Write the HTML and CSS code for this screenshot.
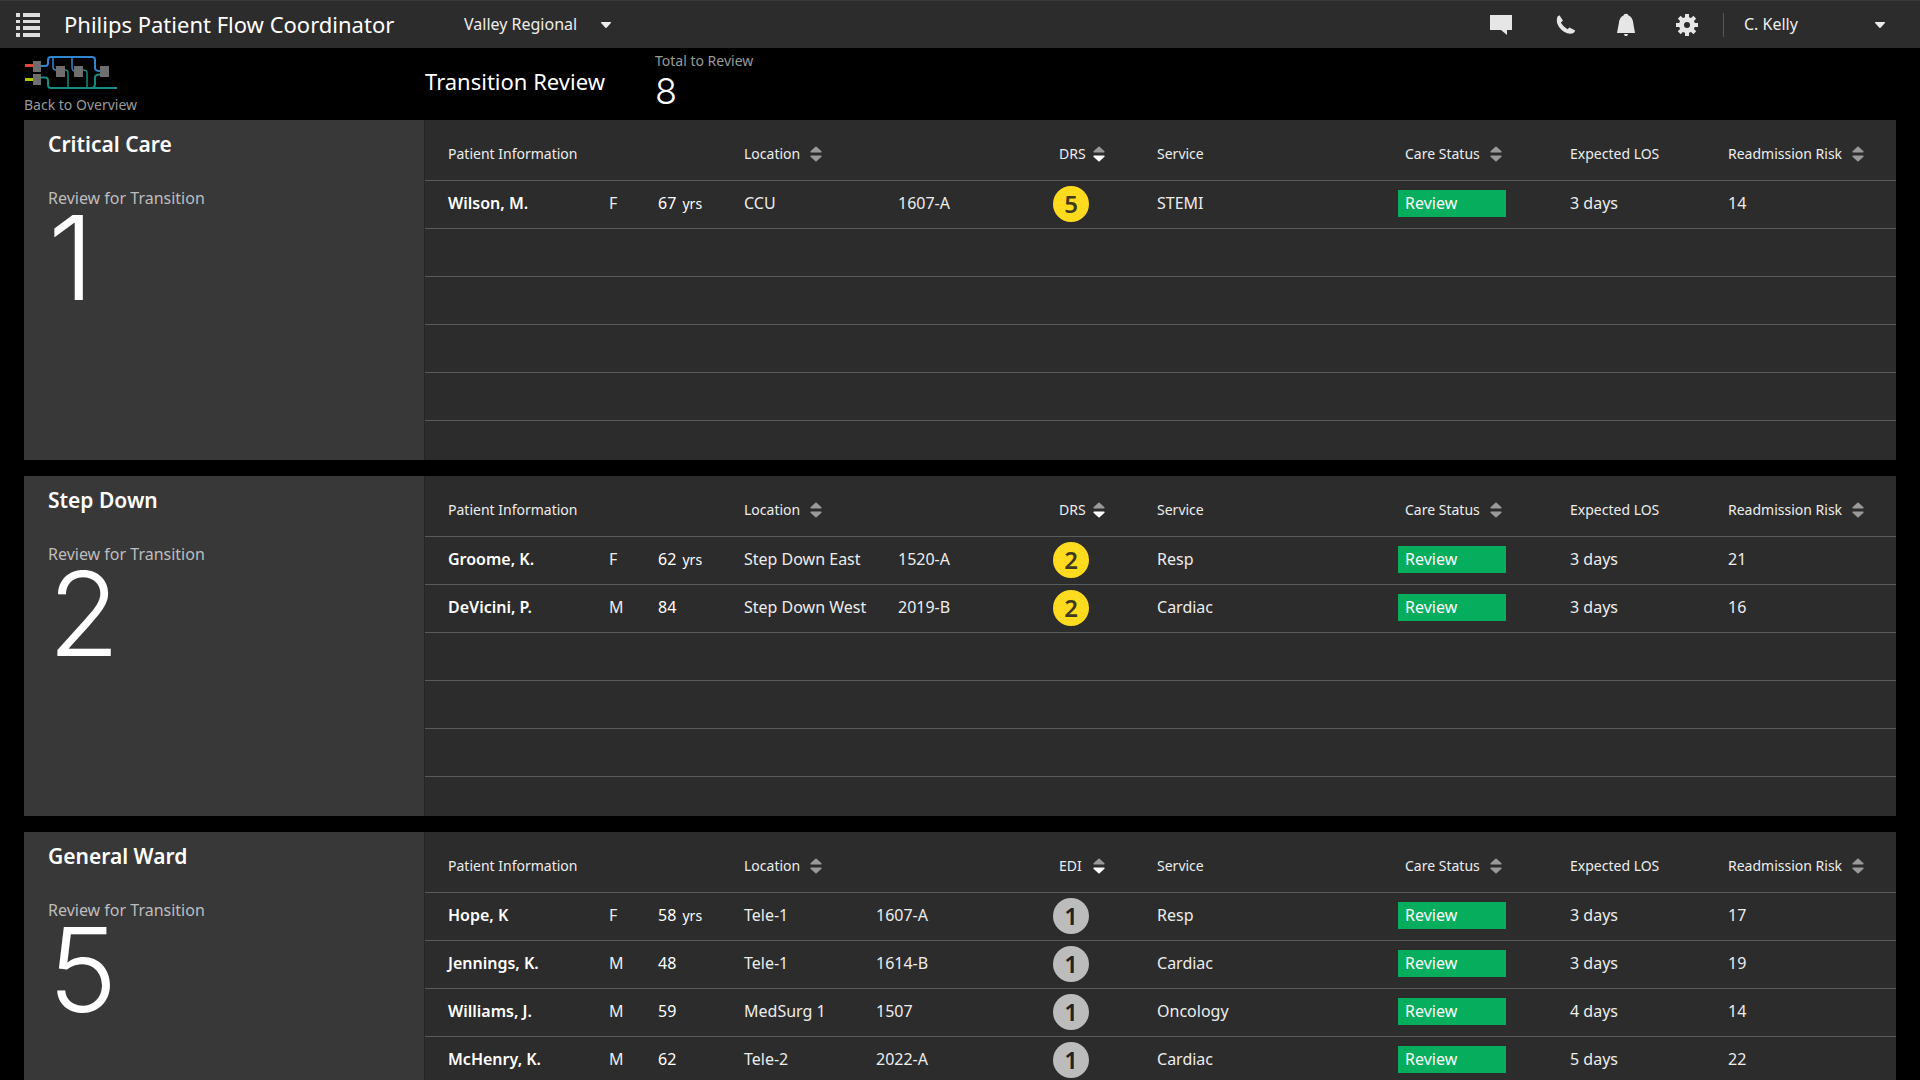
FILE: index.html
```html
<!DOCTYPE html>
<html lang="en">
<head>
<meta charset="utf-8">
<title>Transition Review</title>
<link rel="stylesheet" href="styles.css">
</head>
<body>
<svg width="0" height="0" class="defs" aria-hidden="true">
  <symbol id="caret" viewBox="0 0 12 8"><path d="M1.5 1h9q1 .2.4 1.1L6.6 6.8q-.6.5-1.2 0L1.1 2.1Q.6 1.2 1.5 1z"/></symbol>
  <symbol id="sort" viewBox="0 0 12 16"><path d="M5.4.7q.6-.5 1.2 0L11.5 5.2q.5 1-.5 1.3H1Q0 6.200.5 5.200z"/><path class="down" d="M5.400 15.300q.6.5 1.200 0L11.500 10.800q.5-1-.5-1.300H1Q0 9.800.5 10.800z"/></symbol>
</svg>

<header class="topbar">
  <div class="brand">
    <button class="menu" aria-label="Menu"><svg width="24" height="24" viewBox="0 0 24 24"><path d="M0 0h4v4H0zM7 0h17v4H7zM0 7h4v3H0zM7 7h17v3H7zM0 13h4v4H0zM7 13h17v4H7zM0 20h4v4H0zM7 20h17v4H7z"/></svg></button>
    <span class="product">Philips Patient Flow Coordinator</span>
  </div>
  <label class="site">
    <select aria-label="Hospital"><option>Valley Regional</option></select>
    <svg class="caret" width="12" height="8"><use href="#caret"/></svg>
  </label>
  <nav class="tools">
    <button aria-label="Messages"><svg width="24" height="24" viewBox="0 0 24 24"><path d="M1 2h22v15h-5v5l-6-5H1z"/></svg></button>
    <button aria-label="Calls"><svg width="24" height="24" viewBox="0 0 24 24"><path d="M6.500 3.500L8.500 2.200L12 7.800L9.800 9.600Q12 14 16.500 16.200L18.500 14.400L24.200 17.600Q23 20.800 19.500 20.800Q12.500 20.200 8 14Q4.500 8.500 6.500 3.500Z"/></svg></button>
    <button aria-label="Alerts"><svg width="24" height="24" viewBox="0 0 24 24"><path d="M13 .8q2.500 0 2.500 1.700q4.200 1.500 4.800 8L22 20H4L5.800 10.500q.6-6.500 4.700-8Q10.500.8 13 .8ZM11 21h4l-.8 2h-2.400z"/></svg></button>
    <button aria-label="Settings"><svg width="24" height="24" viewBox="0 0 24 24"><path fill-rule="evenodd" d="M12 4a8 8 0 1 0 0 16a8 8 0 0 0 0-16zM12 9a3 3 0 1 1 0 6a3 3 0 0 1 0-6z"/><path d="M10 1h4v5h-4zM10 18h4v5h-4zM1 10h5v4H1zM18 10h5v4h-5z"/><path transform="rotate(45 12 12)" d="M10 1h4v5h-4zM10 18h4v5h-4zM1 10h5v4H1zM18 10h5v4h-5z"/></svg></button>
  </nav>
  <button class="user"><span>C. Kelly</span><svg class="caret" width="12" height="8"><use href="#caret"/></svg></button>
</header>

<div class="subbar">
  <a class="back" href="#">
    <svg width="96" height="40" viewBox="24 52 96 40">
      <g fill="none" stroke="#2f86cf" stroke-width="2"><path d="M41 66h4q3 0 3-3v-3q0-3 3-3h41q3 0 3 3v8q0 3 5 3"/><path stroke-width="1.500" d="M53 57v10q0 3 3 3M72 57v10q0 4 3 4"/></g>
      <g fill="none" stroke="#168a7c" stroke-width="2"><path d="M41 77.500h4q3 0 3 3V85q0 3 3 3h66M100 74.500q-5 0-5 3V84q0 4-4 4"/><path stroke-width="1.500" d="M65 70q3 0 3 3v15M83 70q4 0 4 3v15"/></g>
      <path stroke="#e2483a" stroke-width="3" d="M25 65.500h8"/><path stroke="#b4c800" stroke-width="3" d="M25 79.500h8"/>
      <path fill="#6e6e6e" d="M33 61h8v11h-8zM33 74h8v11h-8zM56 66h9v11h-9zM74 66h9v11h-9zM100 66h9v11h-9z"/>
    </svg>
    <span>Back to Overview</span>
  </a>
  <h1>Transition Review</h1>
  <div class="total"><span>Total to Review</span><strong>8</strong></div>
</div>

<main>
  <section class="unit">
    <div class="summary"><h2>Critical Care</h2><p>Review for Transition</p><strong>1</strong></div>
    <div class="list">
      <table>
        <colgroup><col class="name"><col class="sex"><col class="age"><col class="ward"><col class="room"><col class="score"><col class="service"><col class="status"><col class="los"><col class="risk"></colgroup>
        <thead><tr><th colspan="3">Patient Information</th><th colspan="2"><button class="sort"><span>Location</span><svg width="12" height="16"><use href="#sort"/></svg></button></th><th class="score-cell"><button class="sort"><span>DRS</span><svg width="12" height="16"><use href="#sort"/></svg></button></th><th>Service</th><th class="status-cell"><button class="sort"><span>Care Status</span><svg width="12" height="16"><use href="#sort"/></svg></button></th><th>Expected LOS</th><th><button class="sort"><span>Readmission Risk</span><svg width="12" height="16"><use href="#sort"/></svg></button></th></tr></thead>
        <tbody>
          <tr><td>Wilson, M.</td><td>F</td><td class="years">67 <small>yrs</small></td><td>CCU</td><td>1607-A</td><td class="mark"><span class="badge high">5</span></td><td>STEMI</td><td><span class="tag">Review</span></td><td>3 days</td><td>14</td></tr>
        </tbody>
      </table>
    </div>
  </section>

  <section class="unit">
    <div class="summary"><h2>Step Down</h2><p>Review for Transition</p><strong>2</strong></div>
    <div class="list">
      <table>
        <colgroup><col class="name"><col class="sex"><col class="age"><col class="ward"><col class="room"><col class="score"><col class="service"><col class="status"><col class="los"><col class="risk"></colgroup>
        <thead><tr><th colspan="3">Patient Information</th><th colspan="2"><button class="sort"><span>Location</span><svg width="12" height="16"><use href="#sort"/></svg></button></th><th class="score-cell"><button class="sort"><span>DRS</span><svg width="12" height="16"><use href="#sort"/></svg></button></th><th>Service</th><th class="status-cell"><button class="sort"><span>Care Status</span><svg width="12" height="16"><use href="#sort"/></svg></button></th><th>Expected LOS</th><th><button class="sort"><span>Readmission Risk</span><svg width="12" height="16"><use href="#sort"/></svg></button></th></tr></thead>
        <tbody>
          <tr><td>Groome, K.</td><td>F</td><td class="years">62 <small>yrs</small></td><td>Step Down East</td><td>1520-A</td><td class="mark"><span class="badge high">2</span></td><td>Resp</td><td><span class="tag">Review</span></td><td>3 days</td><td>21</td></tr>
          <tr><td>DeVicini, P.</td><td>M</td><td class="years">84</td><td>Step Down West</td><td>2019-B</td><td class="mark"><span class="badge high">2</span></td><td>Cardiac</td><td><span class="tag">Review</span></td><td>3 days</td><td>16</td></tr>
        </tbody>
      </table>
    </div>
  </section>

  <section class="unit">
    <div class="summary"><h2>General Ward</h2><p>Review for Transition</p><strong>5</strong></div>
    <div class="list">
      <table>
        <colgroup><col class="name"><col class="sex"><col class="age"><col class="ward short"><col class="room wide"><col class="score"><col class="service"><col class="status"><col class="los"><col class="risk"></colgroup>
        <thead><tr><th colspan="3">Patient Information</th><th colspan="2"><button class="sort"><span>Location</span><svg width="12" height="16"><use href="#sort"/></svg></button></th><th class="score-cell"><button class="sort"><span>EDI</span><svg width="12" height="16"><use href="#sort"/></svg></button></th><th>Service</th><th class="status-cell"><button class="sort"><span>Care Status</span><svg width="12" height="16"><use href="#sort"/></svg></button></th><th>Expected LOS</th><th><button class="sort"><span>Readmission Risk</span><svg width="12" height="16"><use href="#sort"/></svg></button></th></tr></thead>
        <tbody>
          <tr><td>Hope, K</td><td>F</td><td class="years">58 <small>yrs</small></td><td>Tele-1</td><td>1607-A</td><td class="mark"><span class="badge">1</span></td><td>Resp</td><td><span class="tag">Review</span></td><td>3 days</td><td>17</td></tr>
          <tr><td>Jennings, K.</td><td>M</td><td class="years">48</td><td>Tele-1</td><td>1614-B</td><td class="mark"><span class="badge">1</span></td><td>Cardiac</td><td><span class="tag">Review</span></td><td>3 days</td><td>19</td></tr>
          <tr><td>Williams, J.</td><td>M</td><td class="years">59</td><td>MedSurg 1</td><td>1507</td><td class="mark"><span class="badge">1</span></td><td>Oncology</td><td><span class="tag">Review</span></td><td>4 days</td><td>14</td></tr>
          <tr><td>McHenry, K.</td><td>M</td><td class="years">62</td><td>Tele-2</td><td>2022-A</td><td class="mark"><span class="badge">1</span></td><td>Cardiac</td><td><span class="tag">Review</span></td><td>5 days</td><td>22</td></tr>
        </tbody>
      </table>
    </div>
  </section>
</main>
</body>
</html>
```
FILE: styles.css
```css
* { box-sizing: border-box; }

body {
  margin: 0;
  height: 100vh;
  display: flex;
  flex-direction: column;
  overflow: hidden;
  background: #000;
  color: #ececec;
  font: 16px/24px "Noto Sans", sans-serif;
}

h1, h2, p { margin: 0; }

button, select {
  margin: 0;
  padding: 0;
  border: 0;
  background: none;
  color: inherit;
  font: inherit;
  text-align: left;
  appearance: none;
  cursor: pointer;
}

svg { display: block; fill: currentColor; }

.defs { position: absolute; }

/* Top bar */
.topbar {
  flex: none;
  display: flex;
  height: 48px;
  border-top: 1px solid #383838;
  background: #2c2c2c;
}

.brand { flex: 0 0 464px; display: flex; align-items: center; gap: 24px; padding-left: 16px; }
.menu { color: #dedede; }
.product { padding-bottom: 2px; color: #fff; font-size: 22px; white-space: nowrap; }

.site { display: grid; align-items: center; justify-items: end; width: 148px; }
.site > * { grid-area: 1 / 1; }
.site select { width: 100%; padding-bottom: 2px; }
.site .caret { pointer-events: none; }

.tools { display: flex; margin-left: auto; }
.tools button { display: grid; place-items: center; width: 62px; color: #e6e6e6; }
.tools svg { overflow: visible; }

.user {
  display: flex;
  align-items: center;
  justify-content: space-between;
  width: 197px;
  margin-left: 5px;
  padding-right: 34px;
}
.user span { padding: 0 0 2px 20px; border-left: 1px solid #555; line-height: 22px; }

/* Page heading */
.subbar { flex: none; display: flex; height: 72px; padding-top: 1px; }
.back {
  width: 401px;
  margin-left: 24px;
  padding-top: 3px;
  color: #9a9a9a;
  font-size: 14px;
  text-decoration: none;
}
.back span { display: block; padding-top: 1px; }
h1 { width: 230px; padding-top: 16px; color: #fff; font-size: 22px; font-weight: 400; line-height: 32px; }
.total { display: flex; flex-direction: column; color: #9a9a9a; font-size: 14px; }
.total strong { color: #fff; font: 300 36px/36px Inter, sans-serif; }

/* Units */
main {
  flex: 1;
  display: flex;
  flex-direction: column;
  gap: 16px;
  padding: 0 24px;
  overflow-y: auto;
  scrollbar-width: none;
}

.unit { flex: none; display: flex; min-height: 340px; }

.summary { flex: 0 0 400px; padding: 8px 24px; background: #383838; }
.summary h2 { color: #fff; font-size: 21px; font-weight: 600; line-height: 32px; }
.summary p { margin-top: 26px; color: #bdbdbd; }
.summary strong { display: block; color: #fff; font: 300 117px/96px Inter, sans-serif; }

/* Ruled sheet: a 60px head, then one line for every 48px row */
.list {
  flex: 1;
  background: #2c2c2c repeating-linear-gradient(#5a5a5a 0 1px, transparent 1px 48px) 0 60px no-repeat;
  border-left: 1px solid #262626;
}

table { width: 100%; table-layout: fixed; border-collapse: collapse; }
.name { width: 184px; }
.sex { width: 49px; }
.age { width: 86px; }
.ward { width: 154px; }
.room { width: 155px; }
.ward.short { width: 132px; }
.room.wide { width: 177px; }
.score { width: 104px; }
.service { width: 241px; }
.status { width: 172px; }
.los { width: 158px; }

th, td { padding: 0; text-align: left; white-space: nowrap; }
th:first-child, td:first-child { padding-left: 23px; }
th { height: 60px; padding-top: 8px; font-size: 14px; font-weight: 400; }
td { height: 48px; padding-bottom: 2px; }
td:first-child { color: #fff; font-weight: 600; }
.mark { padding-bottom: 0; }
.years { color: #fff; }
.years small { margin-left: 2px; font-size: 14px; }

.sort { display: flex; align-items: center; gap: 10px; }
.sort svg { color: #999; }
.down { fill: var(--down, currentColor); }
.score-cell { --down: #fff; padding-left: 6px; }
.score-cell .sort { gap: 0; }
.score-cell .sort span { width: 34px; }
.status-cell { padding-left: 7px; }

.badge {
  display: grid;
  place-items: center;
  width: 36px;
  height: 36px;
  border-radius: 50%;
  background: #bcbcbc;
  color: #222;
  font-size: 24px;
  font-weight: 600;
}
.badge.high { background: #ffdb20; color: #403a20; }

.tag { display: block; width: 108px; padding-left: 7px; background: #06ad5c; color: #fff; line-height: 27px; }
```
